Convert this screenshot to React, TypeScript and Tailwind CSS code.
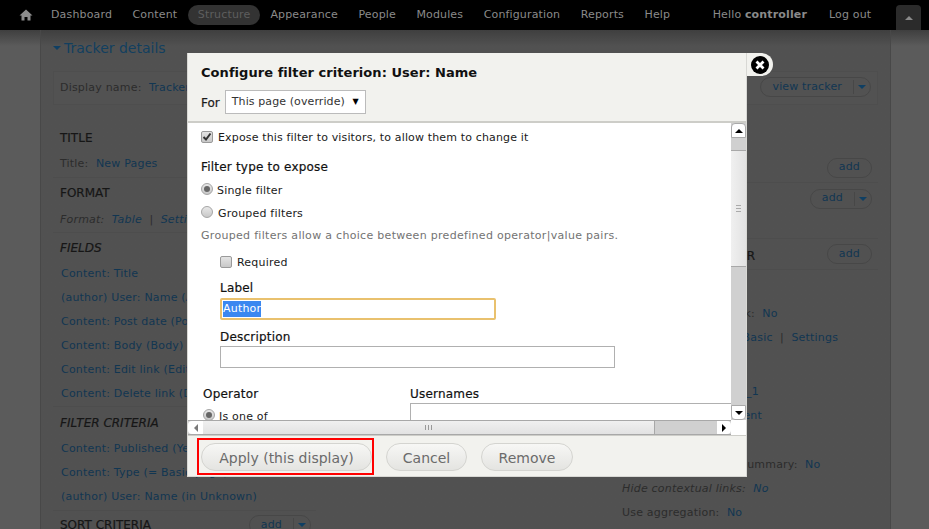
import React from 'react';

const navItems = ['Dashboard', 'Content', 'Structure', 'Appearance', 'People', 'Modules', 'Configuration', 'Reports', 'Help'];

const Caret: React.FC<{ className?: string }> = ({ className }) => (
    <span className={`inline-block w-0 h-0 border-x-[4px] border-x-transparent border-t-[4px] border-t-[#0f3f63] ${className ?? ''}`} />
);

const Toolbar: React.FC = () => (
    <div className="flex items-center h-[30px] bg-black text-[11px] tracking-[0.15px] text-[#8a8a8a] relative z-10 whitespace-nowrap">
        <div className="w-[51px] shrink-0 flex justify-center">
            <svg width="14" height="12" viewBox="0 0 14 12">
                <path d="M7 0.5 L0.5 6.5 L2.5 6.5 L2.5 11.5 L5.5 11.5 L5.5 8 L8.5 8 L8.5 11.5 L11.5 11.5 L11.5 6.5 L13.5 6.5 Z" fill="#8c8c8c" />
            </svg>
        </div>
        {navItems.map((item) => (
            <span
                key={item}
                className={
                    item === 'Structure'
                        ? 'h-[20px] leading-[20px] px-[10px] mr-[10px] -ml-[10px] rounded-[10px] bg-[#333] text-[#5e5e5e]'
                        : 'mr-[20.5px]'
                }
            >
                {item}
            </span>
        ))}
        <span className="ml-[22px]">Hello <b className="font-bold">controller</b></span>
        <span className="ml-[22px]">Log out</span>
        <div className="absolute left-[896px] top-[5px] w-[25px] h-[25px] rounded-t-[4px] bg-[#2b2b2b] flex items-center justify-center">
            <span className="w-0 h-0 border-x-[4px] border-x-transparent border-b-[4px] border-b-[#8a8a8a]" />
        </div>
    </div>
);

const Heading: React.FC<{ children: React.ReactNode; italic?: boolean }> = ({ children, italic }) => (
    <div className={`h-[24px] leading-[24px] px-[7px] text-[12px] text-[#161616] [-webkit-text-stroke:0.2px_#161616] ${italic ? 'italic' : ''}`}>{children}</div>
);

const LinkRow: React.FC<{ children: React.ReactNode }> = ({ children }) => (
    <div className="h-[24px] leading-[24px] px-[8px] text-[11px] tracking-[0.2px] text-[#113652] whitespace-nowrap overflow-hidden">{children}</div>
);

const AddButton: React.FC<{ caret?: boolean; label?: string }> = ({ caret, label = 'add' }) => (
    <div className="flex items-center h-[20px] rounded-[10px] border border-[#474747] text-[11px] tracking-[0.15px] text-[#113652]">
        <span className="px-[11px]">{label}</span>
        {caret && <span className="h-[14px] border-l border-[#474747] px-[4px] flex items-center"><Caret /></span>}
    </div>
);

const LeftColumn: React.FC = () => (
    <div className="w-[263px] flex flex-col">
        <div className="h-[28px] leading-[28px] px-[7px] mt-[4px] text-[12px] text-[#161616] [-webkit-text-stroke:0.2px_#161616]">TITLE</div>
        <div className="h-[24px] leading-[24px] px-[7px] text-[11px] tracking-[0.2px] text-[#2c2c2c]">
            Title:&nbsp; <span className="text-[#113652]">New Pages</span>
        </div>
        <div className="h-[30px] leading-[30px] px-[7px] text-[12px] text-[#161616] [-webkit-text-stroke:0.2px_#161616] border-t border-[#4d4d4d] mt-[1px]">FORMAT</div>
        <div className="h-[25px] leading-[25px] px-[7px] text-[11px] tracking-[0.2px] italic text-[#2c2c2c] whitespace-nowrap">
            Format:&nbsp; <span className="text-[#113652]">Table</span>&nbsp; |&nbsp; <span className="text-[#113652]">Settings</span>
        </div>
        <div className="border-t border-[#4d4d4d] pt-[3px]">
            <Heading italic>FIELDS</Heading>
        </div>
        <div className="pt-[2px]">
            <LinkRow>Content: Title</LinkRow>
            <LinkRow>(author) User: Name (Author)</LinkRow>
            <LinkRow>Content: Post date (Post date)</LinkRow>
            <LinkRow>Content: Body (Body)</LinkRow>
            <LinkRow>Content: Edit link (Edit link)</LinkRow>
            <LinkRow>Content: Delete link (Delete link)</LinkRow>
        </div>
        <div className="border-t border-[#4d4d4d] pt-[4px] h-[31px]">
            <Heading italic>FILTER CRITERIA</Heading>
        </div>
        <LinkRow>Content: Published (Yes)</LinkRow>
        <LinkRow>Content: Type (= Basic page)</LinkRow>
        <LinkRow>(author) User: Name (in Unknown)</LinkRow>
        <div className="border-t border-[#4d4d4d] mt-[1px] pt-[2px] flex items-center justify-between pr-[5px]">
            <Heading>SORT CRITERIA</Heading>
            <AddButton caret />
        </div>
    </div>
);

const Setting: React.FC<{ label: string; value: string; extra?: string; italic?: boolean }> = ({ label, value, extra, italic }) => (
    <div className={`h-[24px] leading-[24px] pl-[6px] text-[11px] tracking-[0.2px] text-[#2c2c2c] whitespace-nowrap ${italic ? 'italic' : ''}`}>
        {label}:&nbsp; <span className="text-[#113652]">{value}</span>
        {extra && <span>&nbsp; |&nbsp; <span className="text-[#113652]">{extra}</span></span>}
    </div>
);

const RightColumn: React.FC = () => (
    <div className="w-[262px] flex flex-col text-[12px] text-[#161616]">
        <div className="h-[29px] mt-[4px]" />
        <div className="h-[30px] flex justify-end items-center pr-[6px] border-b border-[#4d4d4d]"><AddButton /></div>
        <div className="h-[31px] flex justify-end items-center pr-[6px]"><AddButton caret /></div>
        <div className="h-[25px] border-b border-[#4d4d4d]" />
        <div className="h-[31px] flex justify-between items-center pr-[6px] border-b border-[#4d4d4d]">
            <span className="-ml-[1px] mt-[3px] whitespace-nowrap [-webkit-text-stroke:0.2px_#161616]">NO RESULTS BEHAVIOR</span>
            <AddButton />
        </div>
        <div className="h-[32px]" />
        <Setting label="Show a contextual link" value="No" />
        <Setting label="Exposed form style" value="Basic" extra="Settings" />
        <div className="h-[30px]" />
        <Setting label="Machine Name" value="page_1" />
        <Setting label="Query settings" value="Content" />
        <div className="h-[25px]" />
        <Setting label="Hide attachments in summary" value="No" />
        <Setting label="Hide contextual links" value="No" italic />
        <Setting label="Use aggregation" value="No" />
    </div>
);

const ScrollButton: React.FC<{ dir: 'up' | 'down' | 'left' | 'right'; className?: string }> = ({ dir, className }) => (
    <div className={`bg-white flex items-center justify-center ${className ?? ''}`}>
        {dir === 'up' && <span className="w-0 h-0 border-x-[4px] border-x-transparent border-b-[4px] border-b-black" />}
        {dir === 'down' && <span className="w-0 h-0 border-x-[4px] border-x-transparent border-t-[4px] border-t-black" />}
        {dir === 'right' && <span className="w-0 h-0 border-y-[4px] border-y-transparent border-l-[4px] border-l-black" />}
        {dir === 'left' && <span className="w-0 h-0 border-y-[4px] border-y-transparent border-r-[4px] border-r-[#7a7a7a]" />}
    </div>
);

const Box: React.FC<{ checked?: boolean }> = ({ checked }) => (
    <span className="w-[12px] h-[12px] mb-[4px] rounded-[2px] border border-[#9a9a9a] bg-gradient-to-b from-[#e4e4e4] to-[#c8c8c8] flex items-center justify-center shrink-0">
        {checked && (
            <svg width="10" height="10" viewBox="0 0 10 10">
                <path d="M1.5 5 L4 7.5 L8.5 1.5" fill="none" stroke="#333" strokeWidth="2" />
            </svg>
        )}
    </span>
);

const Radio: React.FC<{ checked?: boolean }> = ({ checked }) => (
    <span className="w-[12px] h-[12px] mb-[4px] rounded-full border border-[#a5a5a5] bg-gradient-to-b from-[#e8e8e8] to-[#c8c8c8] flex items-center justify-center shrink-0">
        {checked && <span className="w-[6px] h-[6px] rounded-full bg-[#666]" />}
    </span>
);

const ActionButton: React.FC<{ label: string; className: string }> = ({ label, className }) => (
    <div className={`h-[28px] leading-[28px] text-center rounded-[14px] border border-[#d4d4d0] bg-gradient-to-b from-[#f7f7f5] to-[#e4e4e1] text-[14px] text-[#6b6b6b] ${className}`}>
        {label}
    </div>
);

const formHeading = 'h-[16px] leading-[16px] text-[12px] text-[#111] [-webkit-text-stroke:0.2px_#111]';

const Modal: React.FC = () => (
    <div className="absolute left-[187px] top-[53px] w-[560px] h-[424px] bg-[#f2f2ee] border-x border-b border-[#d8d8d4] flex flex-col text-[#1a1a1a] z-20">
        <div className="h-[70px] shrink-0 px-[13px] border-b-[2px] border-[#cdcdc8]">
            <div className="pt-[10px] h-[35px] text-[13px] tracking-[0.05px] font-bold leading-[20px] text-[#111]">Configure filter criterion: User: Name</div>
            <div className="flex items-center gap-[5px] text-[12px] mt-[2px]">
                <span className="mt-[1px] [-webkit-text-stroke:0.2px_#1a1a1a]">For</span>
                <div className="w-[141px] h-[24px] bg-white border border-[#bbb] flex items-center justify-between pl-[6px] pr-[6px] text-[11px] tracking-[0.1px] text-[#333]">
                    <span>This page (override)</span>
                    <span className="text-[8px] text-black">▼</span>
                </div>
            </div>
        </div>
        <div className="h-[312px] shrink-0 flex flex-col relative">
            <div className="flex h-[297px]">
                <div className="w-[543px] bg-white overflow-hidden text-[11px] tracking-[0.2px] pl-[13px]">
                    <div className="flex items-center gap-[5px] h-[15px] mt-[8px]">
                        <Box checked />
                        <span className="tracking-[0.15px]">Expose this filter to visitors, to allow them to change it</span>
                    </div>
                    <div className={`mt-[13px] ${formHeading}`}>Filter type to expose</div>
                    <div className="flex items-center gap-[4px] mt-[9px] h-[14px]"><Radio checked /><span>Single filter</span></div>
                    <div className="flex items-center gap-[5px] mt-[9px] h-[14px]"><Radio /><span>Grouped filters</span></div>
                    <div className="mt-[7px] h-[16px] leading-[16px] tracking-[0.3px] text-[#737373]">Grouped filters allow a choice between predefined operator|value pairs.</div>
                    <div className="pl-[19px]">
                        <div className="flex items-center gap-[5px] mt-[12px] h-[15px]"><Box /><span>Required</span></div>
                        <div className={`mt-[9px] ${formHeading}`}>Label</div>
                        <div className="mt-[2px] w-[276px] h-[22px] rounded-[2px] border-2 border-[#e9c16e] flex items-center pl-[1px]">
                            <span className="bg-[#3a87f0] text-white leading-[16px]">Author</span>
                        </div>
                        <div className={`mt-[9px] ${formHeading}`}>Description</div>
                        <div className="mt-[1px] w-[395px] h-[22px] border border-[#b0b0b0]" />
                    </div>
                    <div className="flex mt-[18px]">
                        <div className="w-[209px] shrink-0 pl-[2px]">
                            <div className={formHeading}>Operator</div>
                            <div className="flex items-center gap-[4px] mt-[8px] h-[14px]"><Radio checked /><span>Is one of</span></div>
                        </div>
                        <div className="shrink-0">
                            <div className={formHeading}>Usernames</div>
                            <div className="mt-[1px] w-[340px] h-[40px] border border-[#b0b0b0]" />
                        </div>
                    </div>
                </div>
                <div className="w-[15px] bg-[#d0d0d0] flex flex-col">
                    <ScrollButton dir="up" className="h-[15px] rounded-t-[4px] border border-[#aaa] shrink-0" />
                    <div className="h-[12px] shrink-0" />
                    <div className="h-[117px] shrink-0 bg-gradient-to-r from-[#f0f0f0] to-[#e2e2e2] border-y border-[#a8a8a8] flex flex-col items-center justify-center gap-[2px]">
                        <span className="w-[5px] h-px bg-[#aaa]" />
                        <span className="w-[5px] h-px bg-[#aaa]" />
                        <span className="w-[5px] h-px bg-[#aaa]" />
                    </div>
                    <div className="flex-1" />
                    <ScrollButton dir="down" className="h-[15px] rounded-b-[4px] border border-[#aaa] shrink-0" />
                </div>
            </div>
            <div className="flex h-[15px] bg-white">
                <div className="w-[543px] flex bg-[#d0d0d0] border-y border-[#a8a8a8]">
                    <ScrollButton dir="left" className="w-[15px] shrink-0 rounded-l-[4px]" />
                    <div className="w-[452px] shrink-0 bg-gradient-to-b from-[#f0f0f0] to-[#e2e2e2] border-r border-[#a8a8a8] flex items-center justify-center gap-[2px]">
                        <span className="w-px h-[5px] bg-[#999]" />
                        <span className="w-px h-[5px] bg-[#999]" />
                        <span className="w-px h-[5px] bg-[#999]" />
                    </div>
                    <div className="flex-1" />
                    <ScrollButton dir="right" className="w-[14px] shrink-0 rounded-r-[4px]" />
                </div>
            </div>
        </div>
        <div className="flex-1 border-t border-[#cdcdc8] flex items-start gap-[14px] pl-[13px] pt-[7px]">
            <ActionButton label="Apply (this display)" className="w-[171px]" />
            <ActionButton label="Cancel" className="w-[81px]" />
            <ActionButton label="Remove" className="w-[92px]" />
        </div>
        {/* red annotation drawn on the screenshot */}
        <div className="absolute left-[9px] top-[385px] w-[177px] h-[37px] border-2 border-[#f00]" />
        {/* close tab */}
        <div className="absolute -right-[27px] top-0 w-[26px] h-[23px] bg-[#f2f2ee] rounded-r-[12px] flex items-center justify-center">
            <svg width="20" height="20" viewBox="0 0 20 20">
                <circle cx="10" cy="10" r="9" fill="#000" />
                <path d="M6.5 6.5 L13.5 13.5 M13.5 6.5 L6.5 13.5" stroke="#fff" strokeWidth="2.8" />
            </svg>
        </div>
    </div>
);

function App() {
    return (
        <div className="relative w-[929px] h-[529px] overflow-hidden bg-[#5b5b5b] font-['DejaVu_Sans',sans-serif]">
            <Toolbar />
            <div className="flex h-[499px] bg-gradient-to-b from-[#3f3f3f] to-[#5b5b5b] to-[16px]">
                <div className="w-[40px] shrink-0" />
                <div className="w-[851px] shrink-0 border-x border-[#484848] bg-[#515151] bg-gradient-to-b from-[#3f3f3f] to-[#515151] to-[16px] px-[12px]">
                    <div className="pb-[5px] h-[41px] flex items-center gap-[3px] text-[14px] text-[#123f5f]">
                        <Caret />
                        <span>Tracker details</span>
                    </div>
                    <div className="h-[34px] border border-[#4e4e4e] bg-[#525252] flex items-center justify-between pl-[6px] pr-[6px] text-[11px] tracking-[0.2px] text-[#2c2c2c]">
                        <span className="mt-[1px]">Display name:&nbsp; <span className="text-[#113652]">Tracker</span></span>
                        <div className="mb-[2px]"><AddButton label="view tracker" caret /></div>
                    </div>
                    <div className="flex justify-between mt-[15px]">
                        <LeftColumn />
                        <RightColumn />
                    </div>
                </div>
            </div>
            <Modal />
        </div>
    );
}

export default App;
